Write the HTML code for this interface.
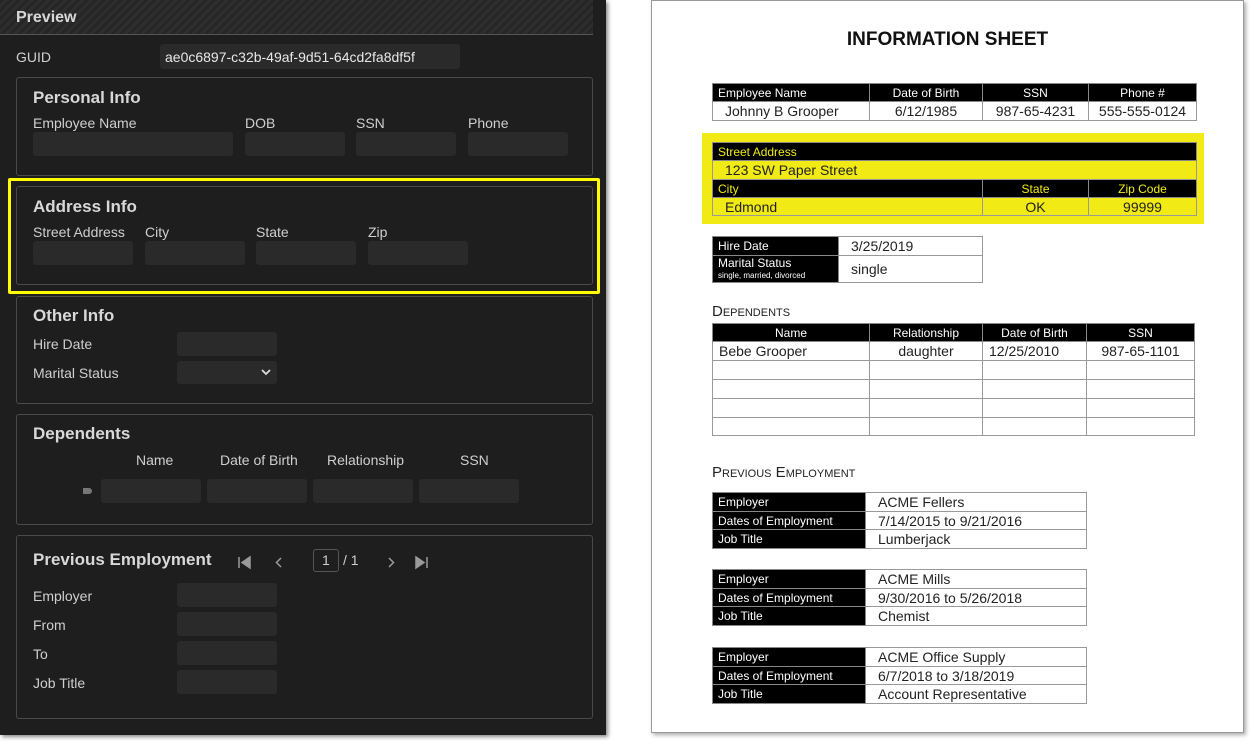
<!DOCTYPE html>
<html><head><meta charset="utf-8"><style>
*{box-sizing:border-box;margin:0;padding:0}
body{width:1250px;height:741px;background:#fff;position:relative;overflow:hidden;font-family:"Liberation Sans",sans-serif}
.a{position:absolute}
#L{left:0;top:0;width:606px;height:735px;background:#1e1e1e;box-shadow:2px 2px 4px #888}
.hd{left:0;top:0;width:593px;height:35px;border-bottom:1px solid #555;background:repeating-linear-gradient(135deg,#262626 0 3px,#2e2e2e 3px 6px)}
.t{color:#cfcfcf;font-size:14px;white-space:nowrap}
.h{color:#d8d8d8;font-size:17px;font-weight:bold;white-space:nowrap}
.box{border:1px solid #4a4a4a;border-radius:3px}
.in{background:#2a2a2a;border-radius:3px;height:24px}
#R{left:651px;top:0;width:593px;height:733px;border:1px solid #999;box-shadow:2px 2px 4px #aaa;background:#fff}
table{position:absolute;border-collapse:collapse;font-family:"Liberation Sans",sans-serif;table-layout:fixed}
td{border:1px solid #999;font-size:14px;color:#222;padding:0 6px;white-space:nowrap;overflow:hidden}
td.k{background:#000;color:#fff;font-size:12px;font-family:"Liberation Sans Narrow","Liberation Sans",sans-serif;border-color:#888;padding:0 5px}
.c{text-align:center}
.y td{background:#f1ea14;color:#222}
.y td.k{background:#000;color:#f1ea14}
.sc{font-size:15px;color:#222;font-variant:small-caps}
</style></head><body>
<div id="L" class="a">
<div class="a hd"></div>
<div class="a h" style="left:16px;top:9px;font-size:16px">Preview</div>
<div class="a t" style="left:16px;top:49px">GUID</div>
<div class="a in" style="left:160px;top:44px;width:300px;height:25px"></div>
<div class="a t" style="left:165px;top:49px;color:#e8e8e8">ae0c6897-c32b-49af-9d51-64cd2fa8df5f</div>

<div class="a box" style="left:16px;top:77px;width:577px;height:99px"></div>
<div class="a h" style="left:33px;top:88px">Personal Info</div>
<div class="a t" style="left:33px;top:115px">Employee Name</div>
<div class="a t" style="left:245px;top:115px">DOB</div>
<div class="a t" style="left:356px;top:115px">SSN</div>
<div class="a t" style="left:468px;top:115px">Phone</div>
<div class="a in" style="left:33px;top:132px;width:200px"></div>
<div class="a in" style="left:245px;top:132px;width:100px"></div>
<div class="a in" style="left:356px;top:132px;width:100px"></div>
<div class="a in" style="left:468px;top:132px;width:100px"></div>

<div class="a" style="left:8px;top:178px;width:592px;height:116px;border:3px solid #ffff00;border-radius:2px"></div>
<div class="a box" style="left:16px;top:186px;width:577px;height:99px"></div>
<div class="a h" style="left:33px;top:197px">Address Info</div>
<div class="a t" style="left:33px;top:224px">Street Address</div>
<div class="a t" style="left:145px;top:224px">City</div>
<div class="a t" style="left:256px;top:224px">State</div>
<div class="a t" style="left:368px;top:224px">Zip</div>
<div class="a in" style="left:33px;top:241px;width:100px"></div>
<div class="a in" style="left:145px;top:241px;width:100px"></div>
<div class="a in" style="left:256px;top:241px;width:100px"></div>
<div class="a in" style="left:368px;top:241px;width:100px"></div>

<div class="a box" style="left:16px;top:296px;width:577px;height:108px"></div>
<div class="a h" style="left:33px;top:306px">Other Info</div>
<div class="a t" style="left:33px;top:336px">Hire Date</div>
<div class="a t" style="left:33px;top:365px">Marital Status</div>
<div class="a in" style="left:177px;top:332px;width:100px"></div>
<div class="a in" style="left:177px;top:361px;width:100px;height:23px"></div>
<svg class="a" style="left:261px;top:368px" width="10" height="8"><path d="M1 2l4 4 4-4" stroke="#ddd" stroke-width="1.8" fill="none"/></svg>

<div class="a box" style="left:16px;top:414px;width:577px;height:111px"></div>
<div class="a h" style="left:33px;top:424px">Dependents</div>
<div class="a t" style="left:136px;top:452px">Name</div>
<div class="a t" style="left:220px;top:452px">Date of Birth</div>
<div class="a t" style="left:327px;top:452px">Relationship</div>
<div class="a t" style="left:460px;top:452px">SSN</div>
<div class="a" style="left:83px;top:488px;width:9px;height:6px;background:#777;border-radius:0 3px 3px 0"></div>
<div class="a in" style="left:101px;top:479px;width:100px"></div>
<div class="a in" style="left:207px;top:479px;width:100px"></div>
<div class="a in" style="left:313px;top:479px;width:100px"></div>
<div class="a in" style="left:419px;top:479px;width:100px"></div>

<div class="a box" style="left:16px;top:535px;width:577px;height:184px"></div>
<div class="a h" style="left:33px;top:550px">Previous Employment</div>
<svg class="a" style="left:237px;top:555px" width="200" height="16">
<path d="M2 2v11M13 2l-8 5.5 8 5.5z" fill="#9a9a9a" stroke="#9a9a9a" stroke-width="1.5"/>
<path d="M44 3l-4.5 4.5 4.5 4.5" stroke="#9a9a9a" stroke-width="1.5" fill="none"/>
<path d="M152 3l4.5 4.5-4.5 4.5" stroke="#9a9a9a" stroke-width="1.5" fill="none"/>
<path d="M179 2l8 5.5-8 5.5zM190 2v11" fill="#9a9a9a" stroke="#9a9a9a" stroke-width="1.5"/>
</svg>
<div class="a" style="left:313px;top:549px;width:26px;height:23px;border:1px solid #555;border-radius:3px"></div>
<div class="a t" style="left:322px;top:552px">1</div>
<div class="a t" style="left:343px;top:552px">/ 1</div>
<div class="a t" style="left:33px;top:588px">Employer</div>
<div class="a t" style="left:33px;top:617px">From</div>
<div class="a t" style="left:33px;top:646px">To</div>
<div class="a t" style="left:33px;top:675px">Job Title</div>
<div class="a in" style="left:177px;top:583px;width:100px"></div>
<div class="a in" style="left:177px;top:612px;width:100px"></div>
<div class="a in" style="left:177px;top:641px;width:100px"></div>
<div class="a in" style="left:177px;top:670px;width:100px"></div>
</div>

<div id="R" class="a"></div>
<div class="a" style="left:651px;top:29px;width:593px;text-align:center;font-weight:bold;font-size:19px;color:#111">INFORMATION SHEET</div>

<table style="left:712px;top:83px;width:484px">
<colgroup><col style="width:157px"><col style="width:113px"><col style="width:106px"><col style="width:108px"></colgroup>
<tr style="height:18px"><td class="k">Employee Name</td><td class="k c">Date of Birth</td><td class="k c">SSN</td><td class="k c">Phone #</td></tr>
<tr style="height:19px"><td style="padding-left:12px">Johnny B Grooper</td><td class="c">6/12/1985</td><td class="c">987-65-4231</td><td class="c">555-555-0124</td></tr>
</table>

<div class="a" style="left:702px;top:133px;width:502px;height:91px;background:#f1ea14"></div>
<table class="y" style="left:712px;top:142px;width:484px">
<colgroup><col style="width:270px"><col style="width:106px"><col style="width:108px"></colgroup>
<tr style="height:18px"><td class="k" colspan="3">Street Address</td></tr>
<tr style="height:19px"><td colspan="3" style="padding-left:12px">123 SW Paper Street</td></tr>
<tr style="height:18px"><td class="k">City</td><td class="k c">State</td><td class="k c">Zip Code</td></tr>
<tr style="height:18px"><td style="padding-left:12px">Edmond</td><td class="c">OK</td><td class="c">99999</td></tr>
</table>

<table style="left:712px;top:236px;width:270px">
<colgroup><col style="width:126px"><col style="width:144px"></colgroup>
<tr style="height:19px"><td class="k">Hire Date</td><td style="padding-left:12px">3/25/2019</td></tr>
<tr style="height:27px"><td class="k" style="line-height:11px">Marital Status<br><span style="font-size:8px">single, married, divorced</span></td><td style="padding-left:12px">single</td></tr>
</table>

<div class="a sc" style="left:712px;top:303px">Dependents</div>
<table style="left:712px;top:323px;width:482px">
<colgroup><col style="width:157px"><col style="width:113px"><col style="width:104px"><col style="width:108px"></colgroup>
<tr style="height:18px"><td class="k c">Name</td><td class="k c">Relationship</td><td class="k c">Date of Birth</td><td class="k c">SSN</td></tr>
<tr style="height:19px"><td>Bebe Grooper</td><td class="c">daughter</td><td>12/25/2010</td><td class="c">987-65-1101</td></tr>
<tr style="height:19px"><td></td><td></td><td></td><td></td></tr>
<tr style="height:19px"><td></td><td></td><td></td><td></td></tr>
<tr style="height:19px"><td></td><td></td><td></td><td></td></tr>
<tr style="height:18px"><td></td><td></td><td></td><td></td></tr>
</table>

<div class="a sc" style="left:712px;top:464px">Previous Employment</div>
<table style="left:712px;top:492px;width:374px">
<colgroup><col style="width:153px"><col style="width:221px"></colgroup>
<tr style="height:19px"><td class="k">Employer</td><td style="padding-left:12px">ACME Fellers</td></tr>
<tr style="height:18px"><td class="k">Dates of Employment</td><td style="padding-left:12px">7/14/2015 to 9/21/2016</td></tr>
<tr style="height:19px"><td class="k">Job Title</td><td style="padding-left:12px">Lumberjack</td></tr>
</table>
<table style="left:712px;top:569px;width:374px">
<colgroup><col style="width:153px"><col style="width:221px"></colgroup>
<tr style="height:19px"><td class="k">Employer</td><td style="padding-left:12px">ACME Mills</td></tr>
<tr style="height:18px"><td class="k">Dates of Employment</td><td style="padding-left:12px">9/30/2016 to 5/26/2018</td></tr>
<tr style="height:19px"><td class="k">Job Title</td><td style="padding-left:12px">Chemist</td></tr>
</table>
<table style="left:712px;top:647px;width:374px">
<colgroup><col style="width:153px"><col style="width:221px"></colgroup>
<tr style="height:19px"><td class="k">Employer</td><td style="padding-left:12px">ACME Office Supply</td></tr>
<tr style="height:18px"><td class="k">Dates of Employment</td><td style="padding-left:12px">6/7/2018 to 3/18/2019</td></tr>
<tr style="height:19px"><td class="k">Job Title</td><td style="padding-left:12px">Account Representative</td></tr>
</table>
</body></html>
